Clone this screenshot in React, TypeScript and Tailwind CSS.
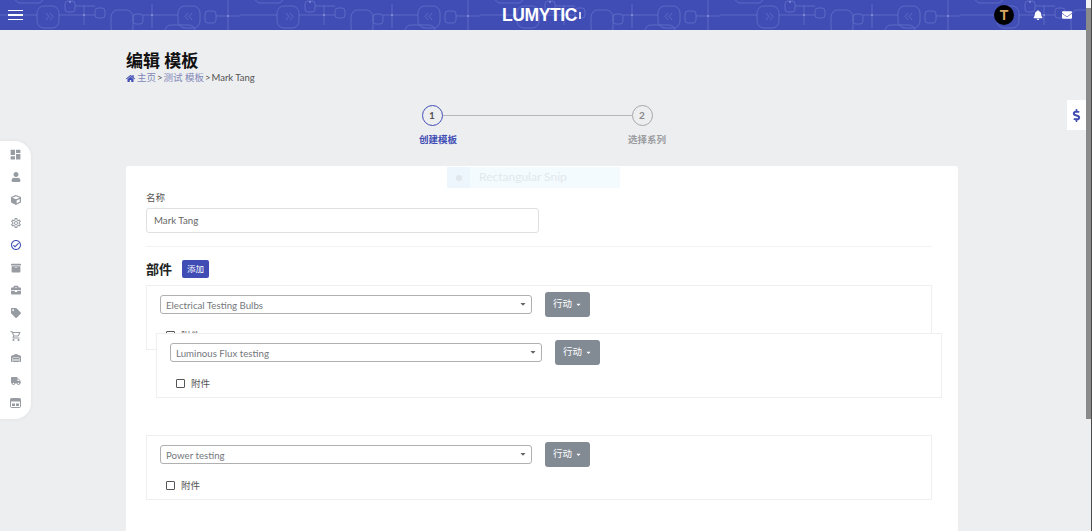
import {
  FaArchive,
  FaBell,
  FaBriefcase,
  FaCaretDown,
  FaCube,
  FaDollarSign,
  FaEnvelope,
  FaHome,
  FaTag,
  FaTruck,
  FaUser,
  FaWarehouse,
} from "react-icons/fa";
import { MdDashboard, MdOutlineCheckCircleOutline, MdOutlineSettings, MdOutlineShoppingCart } from "react-icons/md";

const font = "[font-family:'Lato','Noto_Sans_CJK_SC',sans-serif]";

function HeaderPattern() {
  return (
    <svg className="absolute inset-0 h-full w-full" aria-hidden="true">
      <defs>
        <pattern id="circuit" width="240" height="30" patternUnits="userSpaceOnUse">
          <g fill="none" stroke="#8b97e0" strokeWidth="1" opacity="0.38">
            <rect x="37" y="6" width="22" height="22" rx="7" />
            <path d="M46 13l3 3.500-3 3.500M50 13l3 3.500-3 3.500" />
            <rect x="65" y="1" width="10" height="11" rx="3" />
            <path d="M0 15h37M59 15h36M84 5v20M75 6h20" />
            <rect x="95" y="8" width="10" height="10" rx="3" />
            <rect x="111" y="10" width="22" height="24" rx="7" />
            <rect x="133" y="14" width="10" height="10" rx="3" />
            <path d="M143 15h35M152 4v24" />
            <rect x="178" y="6" width="22" height="22" rx="7" />
            <path d="M192 13l-3 3.500 3 3.500M188 13l-3 3.500 3 3.500" />
            <rect x="205" y="11" width="11" height="12" rx="3" />
            <path d="M216 16h24M228 0v30" />
            <rect x="15" y="-8" width="28" height="11" rx="5" />
            <rect x="165" y="25" width="30" height="14" rx="6" />
          </g>
          <g fill="#aab3ea" opacity="0.6">
            <circle cx="84" cy="15" r="1" />
            <circle cx="152" cy="15" r="1" />
            <circle cx="228" cy="16" r="1" />
            <circle cx="70" cy="2" r="1" />
          </g>
        </pattern>
      </defs>
      <rect width="100%" height="100%" fill="url(#circuit)" />
    </svg>
  );
}

function SideIcon({ children, active }: { children: React.ReactNode; active?: boolean }) {
  return (
    <div className={`flex h-[22.6px] items-center justify-center text-[10px] ${active ? "text-[#3f4db5]" : "text-[#979ba2]"}`}>
      {children}
    </div>
  );
}

function Sidebar() {
  return (
    <nav className="absolute left-0 top-[141px] flex h-[278px] w-[31px] flex-col rounded-r-[16px] bg-white pt-[2.5px] shadow-[0_0_4px_rgba(0,0,0,0.06)]">
      <SideIcon><MdDashboard className="text-[13px]" /></SideIcon>
      <SideIcon><FaUser /></SideIcon>
      <SideIcon><FaCube /></SideIcon>
      <SideIcon><MdOutlineSettings className="text-[12px]" /></SideIcon>
      <SideIcon active><MdOutlineCheckCircleOutline className="text-[12px]" /></SideIcon>
      <SideIcon><FaArchive /></SideIcon>
      <SideIcon><FaBriefcase /></SideIcon>
      <SideIcon><FaTag /></SideIcon>
      <SideIcon><MdOutlineShoppingCart className="text-[12px]" /></SideIcon>
      <SideIcon><FaWarehouse /></SideIcon>
      <SideIcon><FaTruck /></SideIcon>
      <SideIcon>
        <svg width="11" height="10" viewBox="0 0 11 10">
          <rect x="0.5" y="0.5" width="10" height="9" rx="1" fill="none" stroke="currentColor" />
          <rect x="0.5" y="0.5" width="10" height="3" fill="currentColor" />
          <rect x="2" y="5.500" width="3" height="2.500" fill="currentColor" />
          <rect x="6" y="5.500" width="3" height="2.500" fill="currentColor" />
        </svg>
      </SideIcon>
    </nav>
  );
}

function Stepper() {
  return (
    <div className="mt-[21px] ml-[292px] w-[260px]">
      <div className="flex items-center pl-[3.5px]">
        <div className="flex h-[21px] w-[21px] shrink-0 items-center justify-center rounded-full border border-[#3f4db5] text-[10px] font-bold text-[#555]">1</div>
        <div className="h-px w-[189px] bg-[#b5b7ba]" />
        <div className="flex h-[21px] w-[21px] shrink-0 items-center justify-center rounded-full border border-[#a5a7aa] text-[10px] font-bold text-[#888]">2</div>
      </div>
      <div className="mt-[7px] flex text-[9.5px] leading-[14px] font-bold">
        <span className="ml-px w-[209px] text-[#3f4db5]">创建模板</span>
        <span className="text-[#9a9c9f]">选择系列</span>
      </div>
    </div>
  );
}

function Part({ name, className }: { name: string; className?: string }) {
  return (
    <div className={`h-[65px] w-[786px] border border-[#eeeff1] bg-white px-[13px] pt-[6px] ${className ?? ""}`}>
      <div className="flex items-center gap-[13px]">
        <div className="mt-[-1px] flex h-[19px] w-[372px] items-center justify-between rounded-[3px] border border-[#b0b0b0] pl-[5px] pr-[4px] text-[9.7px] text-[#74777c]">
          <span className="mt-[2px]">{name}</span>
          <FaCaretDown className="text-[8px] text-[#666]" />
        </div>
        <button className="flex h-[25px] w-[45px] items-center justify-center gap-[3px] rounded-[3px] bg-[#828a94] text-[9.5px] text-white">
          行动
          <FaCaretDown className="text-[7px]" />
        </button>
      </div>
      <label className="mt-[11.5px] ml-[6px] flex items-center gap-[6px] text-[9.5px] leading-[14px] text-[#555]">
        <span className="h-[9px] w-[9px] rounded-[1px] border border-[#555]" />
        附件
      </label>
    </div>
  );
}

function Topbar() {
  return (
    <header className="relative flex h-[30px] shrink-0 items-center justify-between bg-[#3f4db5] pl-[8px] pr-[14px]">
      <HeaderPattern />
      <div className="relative flex w-[15px] flex-col gap-[3px]">
        <span className="h-[1.5px] bg-white" />
        <span className="h-[1.5px] bg-white" />
        <span className="h-[1.5px] bg-white" />
      </div>
      <div className="absolute left-[502px] top-[4px] flex items-center">
        <span className="text-[17.5px] leading-[22px] font-bold tracking-[-0.4px] text-white [font-family:'Liberation_Sans',sans-serif]">LUMYTIC</span>
        <span className="ml-[2px] h-[7px] w-[2px] bg-white/80" />
      </div>
      <div className="relative flex items-center">
        <div className="flex h-[20px] w-[20px] items-center justify-center rounded-full bg-black">
          <span className="text-[14px] leading-none font-bold text-[#d9a860] [font-family:'Liberation_Sans',sans-serif]">T</span>
        </div>
        <FaBell className="ml-[19px] text-[10px] text-white" />
        <FaEnvelope className="ml-[19px] text-[10px] text-white" />
      </div>
    </header>
  );
}

export default function App() {
  return (
    <div className={`flex h-[531px] w-[1092px] overflow-hidden bg-[#edeef0] ${font}`}>
      <div className="relative flex min-w-0 flex-1 flex-col">
        <Topbar />
        <Sidebar />
        <button className="absolute right-0 top-[100px] flex h-[30px] w-[19px] items-center justify-center bg-white text-[13px] text-[#3f4db5]">
          <FaDollarSign />
        </button>

        <main className="flex min-h-0 flex-1 flex-col pl-[126px]">
          <h1 className="mt-[19px] text-[17px] leading-[23px] font-bold text-[#111]">编辑 模板</h1>
          <div className="flex items-center gap-[1px] text-[9.5px] leading-[12px] text-[#555]">
            <FaHome className="mr-px text-[9px] text-[#3f4db5]" />
            <span className="text-[#8087b8]">主页</span>
            {">"}
            <span className="text-[#8087b8]">测试 模板</span>
            {">"}
            <span>Mark Tang</span>
          </div>

          <Stepper />

          <section className="relative mt-[19px] w-[832px] flex-1 rounded-t-[3px] bg-white px-[20px] pt-[25px]">
            <div className="absolute left-[321px] top-[1px] flex h-[21px] w-[173px] items-center bg-[#f4fbff] text-[12px] text-[#e2e8ec]">
              <span className="flex h-full w-[23px] items-center justify-center bg-[#edf6fd]">
                <span className="h-[6px] w-[6px] rounded-full bg-[#dfe6ec]" />
              </span>
              <span className="mt-[-2px] ml-[9px]">Rectangular Snip</span>
            </div>

            <label className="block text-[9.5px] leading-[14px] text-[#555]">名称</label>
            <div className="mt-[3px] flex h-[25px] w-[393px] items-center rounded-[3px] border border-[#dfe0e2] pl-[7px] text-[9.7px] text-[#666]">Mark Tang</div>
            <div className="mt-[13px] h-px w-[786px] bg-[#f3f3f4]" />
            <div className="mt-[13px] flex items-center gap-[10px]">
              <h2 className="text-[13px] leading-[18px] font-bold text-[#222]">部件</h2>
              <button className="h-[18px] w-[27px] rounded-[2px] bg-[#3f4db5] text-[8.5px] text-white">添加</button>
            </div>

            <div className="relative mt-[7px]">
              <Part name="Electrical Testing Bulbs" />
              <Part name="Luminous Flux testing" className="absolute left-[10px] top-[48px]" />
              <Part name="Power testing" className="mt-[85px]" />
            </div>
          </section>
        </main>
      </div>

      <div className="flex w-[6px] shrink-0 flex-col border-r border-[#4a4a4a]">
        <div className="h-[8px] bg-[#f3f3f3]" />
        <div className="h-[411px] bg-[#8a8a8a]" />
        <div className="flex-1 bg-[#edeef0]" />
      </div>
    </div>
  );
}
